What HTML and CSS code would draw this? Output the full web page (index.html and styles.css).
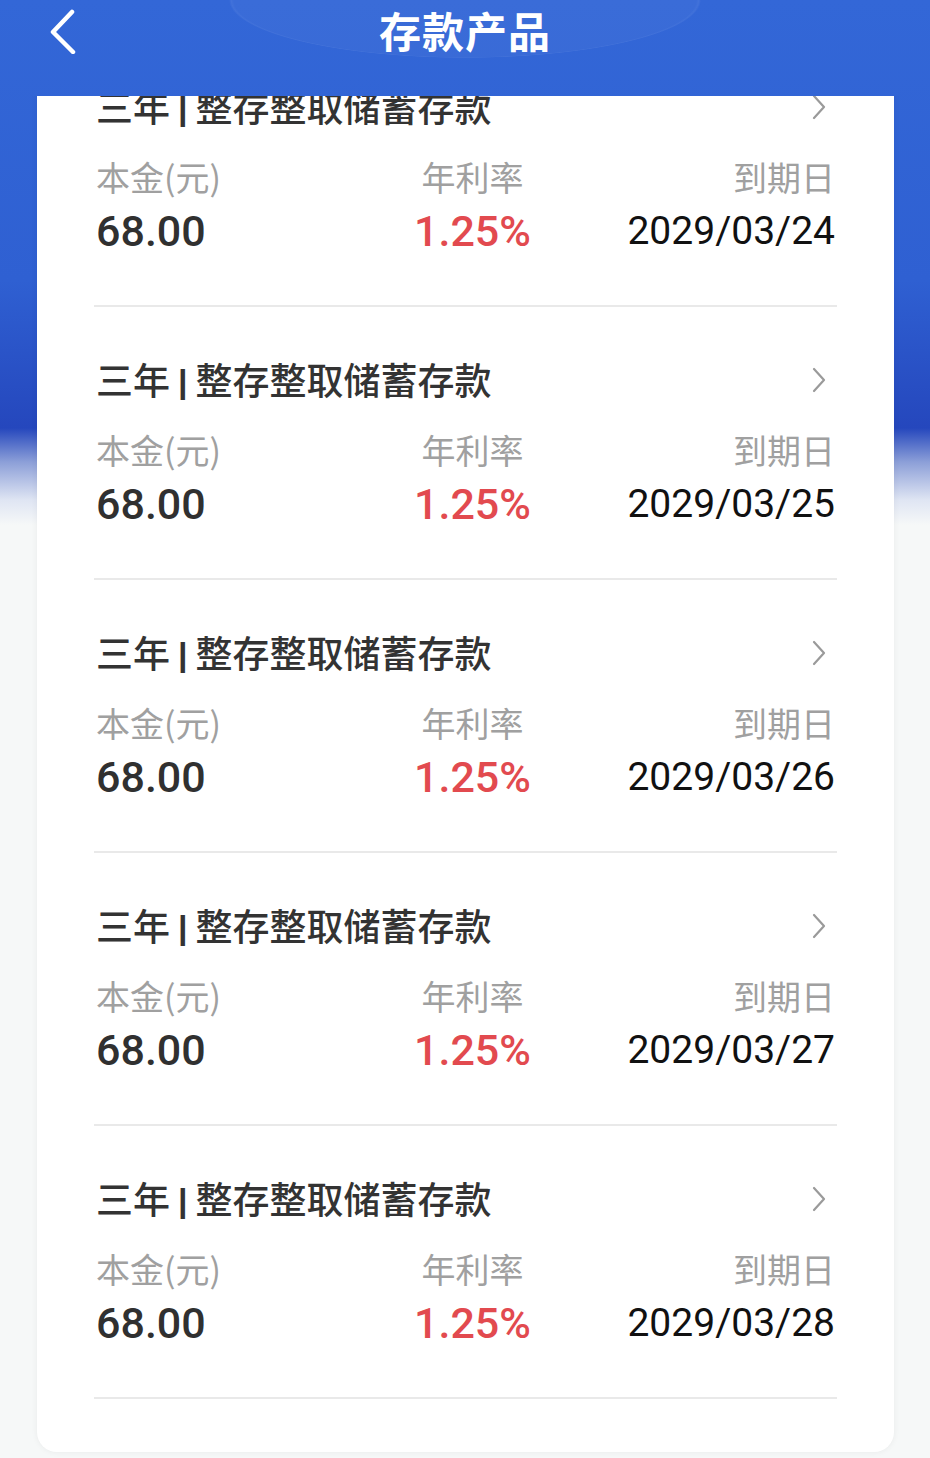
FILE: index.html
```html
<!DOCTYPE html>
<html lang="zh-CN">
<head>
    <meta charset="UTF-8" />
    <meta name="viewport" content="width=device-width, initial-scale=1" />
    <title>存款产品</title>
    <link rel="stylesheet" href="styles.css">
</head>
<body>
    <header class="topbar">
        <button class="back" aria-label="返回">
            <svg width="30" height="46" viewBox="0 0 30 46">
                <path d="M24 4 L5 24 L25 44" fill="none" stroke="#fff" stroke-width="4.5" stroke-linecap="round" stroke-linejoin="round"/>
            </svg>
        </button>
        <h1 class="title">存款产品</h1>
    </header>

    <main class="viewport">
        <div class="card">
            <ul class="deposit-list">
                <li class="deposit">
                    <div class="deposit-head">
                        <span class="deposit-name">三年<span class="sep">|</span>整存整取储蓄存款</span>
                        <svg class="arrow" width="16" height="26" viewBox="0 0 16 26"><path d="M3 2 L13 13 L3 24" fill="none" stroke="#9a9a9a" stroke-width="2.2" stroke-linecap="round" stroke-linejoin="round"/></svg>
                    </div>
                    <div class="deposit-grid">
                        <span class="label">本金(元)</span>
                        <span class="label mid">年利率</span>
                        <span class="label end">到期日</span>
                        <span class="amount">68.00</span>
                        <span class="rate mid">1.25%</span>
                        <span class="date end">2029/03/24</span>
                    </div>
                </li>
                <li class="deposit">
                    <div class="deposit-head">
                        <span class="deposit-name">三年<span class="sep">|</span>整存整取储蓄存款</span>
                        <svg class="arrow" width="16" height="26" viewBox="0 0 16 26"><path d="M3 2 L13 13 L3 24" fill="none" stroke="#9a9a9a" stroke-width="2.2" stroke-linecap="round" stroke-linejoin="round"/></svg>
                    </div>
                    <div class="deposit-grid">
                        <span class="label">本金(元)</span>
                        <span class="label mid">年利率</span>
                        <span class="label end">到期日</span>
                        <span class="amount">68.00</span>
                        <span class="rate mid">1.25%</span>
                        <span class="date end">2029/03/25</span>
                    </div>
                </li>
                <li class="deposit">
                    <div class="deposit-head">
                        <span class="deposit-name">三年<span class="sep">|</span>整存整取储蓄存款</span>
                        <svg class="arrow" width="16" height="26" viewBox="0 0 16 26"><path d="M3 2 L13 13 L3 24" fill="none" stroke="#9a9a9a" stroke-width="2.2" stroke-linecap="round" stroke-linejoin="round"/></svg>
                    </div>
                    <div class="deposit-grid">
                        <span class="label">本金(元)</span>
                        <span class="label mid">年利率</span>
                        <span class="label end">到期日</span>
                        <span class="amount">68.00</span>
                        <span class="rate mid">1.25%</span>
                        <span class="date end">2029/03/26</span>
                    </div>
                </li>
                <li class="deposit">
                    <div class="deposit-head">
                        <span class="deposit-name">三年<span class="sep">|</span>整存整取储蓄存款</span>
                        <svg class="arrow" width="16" height="26" viewBox="0 0 16 26"><path d="M3 2 L13 13 L3 24" fill="none" stroke="#9a9a9a" stroke-width="2.2" stroke-linecap="round" stroke-linejoin="round"/></svg>
                    </div>
                    <div class="deposit-grid">
                        <span class="label">本金(元)</span>
                        <span class="label mid">年利率</span>
                        <span class="label end">到期日</span>
                        <span class="amount">68.00</span>
                        <span class="rate mid">1.25%</span>
                        <span class="date end">2029/03/27</span>
                    </div>
                </li>
                <li class="deposit">
                    <div class="deposit-head">
                        <span class="deposit-name">三年<span class="sep">|</span>整存整取储蓄存款</span>
                        <svg class="arrow" width="16" height="26" viewBox="0 0 16 26"><path d="M3 2 L13 13 L3 24" fill="none" stroke="#9a9a9a" stroke-width="2.2" stroke-linecap="round" stroke-linejoin="round"/></svg>
                    </div>
                    <div class="deposit-grid">
                        <span class="label">本金(元)</span>
                        <span class="label mid">年利率</span>
                        <span class="label end">到期日</span>
                        <span class="amount">68.00</span>
                        <span class="rate mid">1.25%</span>
                        <span class="date end">2029/03/28</span>
                    </div>
                </li>
            </ul>
        </div>
    </main>
</body>
</html>
```

FILE: styles.css
```css
* {
    box-sizing: border-box;
}
html, body {
    margin: 0;
    padding: 0;
}
body {
    width: 930px;
    height: 1458px;
    overflow: hidden;
    font-family: "Noto Sans CJK SC", "Noto Sans", sans-serif;
    background:
        linear-gradient(to bottom,
            #3367d7 0,
            #2f60d2 280px,
            #2547bd 428px,
            #8c9fd8 462px,
            #dfe5f3 500px,
            #f6f8f8 525px,
            #f6f8f8 100%);
}
.topbar {
    height: 96px;
    display: flex;
    align-items: flex-start;
    justify-content: center;
    position: relative;
    background: radial-gradient(ellipse 236px 58px at 50% 0, rgba(255, 255, 255, 0.035) 98%, rgba(255, 255, 255, 0.07) 99%, rgba(255, 255, 255, 0) 100%);
}
.back {
    position: absolute;
    left: 48px;
    top: 8px;
    padding: 0;
    border: none;
    background: none;
    cursor: pointer;
}
.title {
    margin: 0;
    padding-top: 4px;
    color: #fff;
    font-size: 42px;
    line-height: 52px;
    font-weight: 700;
    letter-spacing: 1px;
}
.viewport {
    height: 1362px;
    overflow: hidden;
    padding: 0 36px 0 37px;
}
.card {
    margin-top: -62px;
    background: #fff;
    border-radius: 20px;
    padding: 0 57px 53px;
    box-shadow: 0 0 6px rgba(0, 0, 0, 0.06);
}
.deposit-list {
    list-style: none;
    margin: 0;
    padding: 0;
}
.deposit {
    height: 273px;
    padding: 48px 2px 0;
    border-bottom: 2px solid #e9e9e9;
}
.deposit-head {
    height: 50px;
    display: flex;
    align-items: center;
    justify-content: space-between;
}
.deposit-name {
    color: #333;
    font-size: 37px;
    line-height: 50px;
    font-weight: 500;
}
.sep {
    font-family: "Liberation Sans", Arial, sans-serif;
    font-size: 34px;
    font-weight: 700;
    margin: 0 8px 0 8px;
    vertical-align: 2px;
}
.arrow {
    margin-right: 8px;
}
.deposit-grid {
    margin-top: 25px;
    display: grid;
    grid-template-columns: 1fr 1fr 1fr;
    grid-template-rows: 44px 52px;
    row-gap: 4px;
    align-items: center;
}
.label {
    color: #a0a0a0;
    font-size: 34px;
    line-height: 44px;
    margin-top: -4px;
}
.mid {
    text-align: center;
    padding-left: 14px;
}
.end {
    text-align: right;
}
.amount, .rate, .date {
    font-family: Roboto, "Noto Sans", sans-serif;
    line-height: 52px;
}
.amount {
    color: #303030;
    font-size: 43px;
    font-weight: 500;
}
.rate {
    color: #e24a4f;
    font-size: 43px;
    font-weight: 500;
}
.date {
    color: #111;
    font-size: 39px;
}
```
